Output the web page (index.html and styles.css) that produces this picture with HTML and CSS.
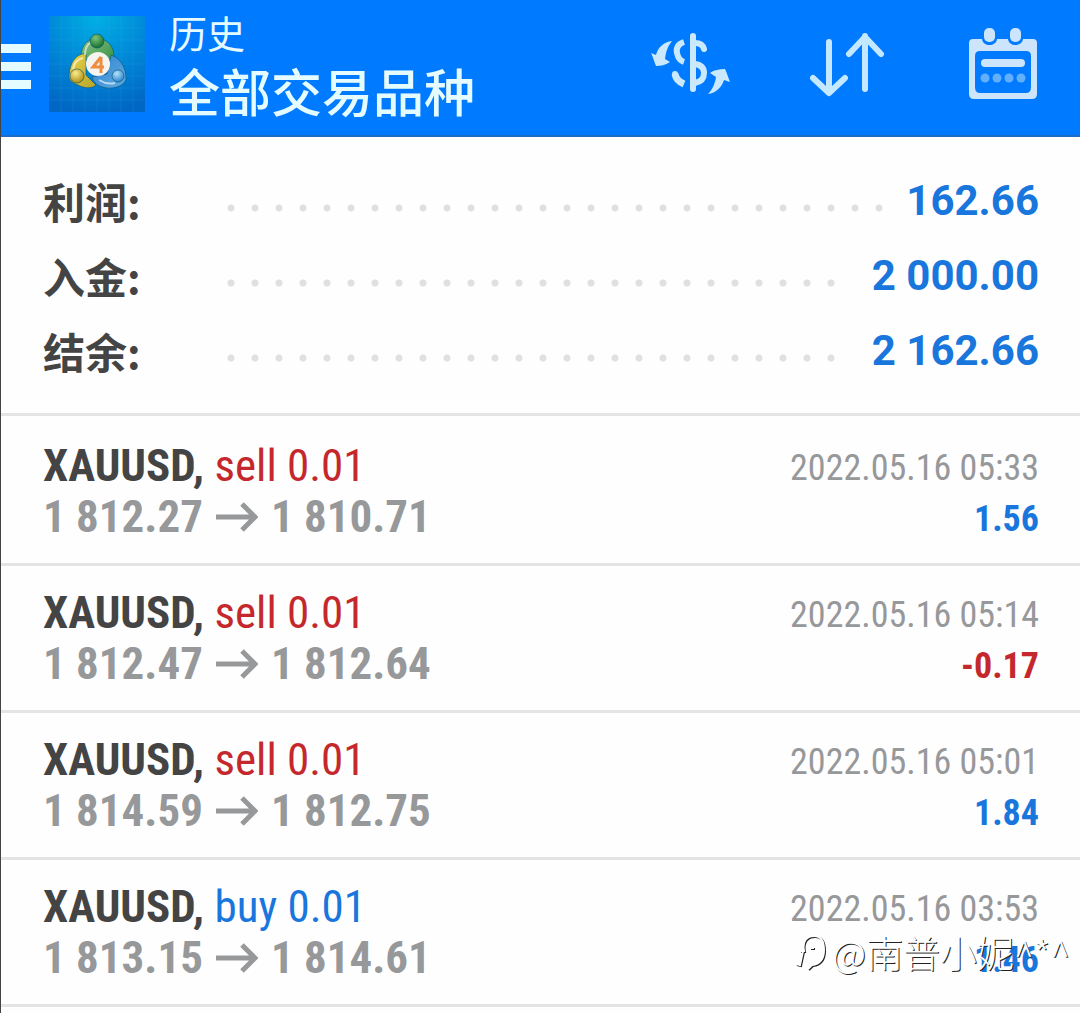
FILE: index.html
```html
<!DOCTYPE html>
<html lang="zh-CN">
<head>
<meta charset="utf-8">
<meta name="viewport" content="width=device-width, initial-scale=1">
<title>历史</title>
<link rel="stylesheet" href="styles.css">
</head>
<body>
<div class="app">
  <header class="bar">
    <button type="button" class="menu" aria-label="菜单"><span></span><span></span><span></span></button>
    <svg class="logo" viewBox="0 0 96 96" aria-hidden="true">
      <defs>
        <radialGradient id="sky" cx="50%" cy="0%" r="100%">
          <stop offset="0" stop-color="#00b0e4"/>
          <stop offset="0.5" stop-color="#008ad8"/>
          <stop offset="1" stop-color="#0068c4"/>
        </radialGradient>
        <linearGradient id="green" x1="0" y1="0" x2="1" y2="1">
          <stop offset="0" stop-color="#8cc488"/>
          <stop offset="1" stop-color="#2c8a3c"/>
        </linearGradient>
        <linearGradient id="gold" x1="0" y1="0" x2="1" y2="1">
          <stop offset="0" stop-color="#ecd44c"/>
          <stop offset="1" stop-color="#b4a428"/>
        </linearGradient>
        <linearGradient id="blue" x1="0" y1="0" x2="1" y2="1">
          <stop offset="0" stop-color="#2c80cc"/>
          <stop offset="1" stop-color="#60ace4"/>
        </linearGradient>
        <radialGradient id="headGreen" cx="40%" cy="30%" r="70%">
          <stop offset="0" stop-color="#7cc47c"/>
          <stop offset="1" stop-color="#14702c"/>
        </radialGradient>
        <radialGradient id="headGold" cx="40%" cy="30%" r="70%">
          <stop offset="0" stop-color="#fcec90"/>
          <stop offset="1" stop-color="#b09010"/>
        </radialGradient>
        <radialGradient id="headBlue" cx="40%" cy="30%" r="70%">
          <stop offset="0" stop-color="#b4e4fc"/>
          <stop offset="1" stop-color="#2c84cc"/>
        </radialGradient>
      </defs>
      <rect width="96" height="96" fill="url(#sky)"/>
      <path d="M12 0V96M24 0V96M36 0V96M48 0V96M60 0V96M72 0V96M84 0V96M0 12H96M0 24H96M0 36H96M0 48H96M0 60H96M0 72H96M0 84H96" stroke="#40b4f0" stroke-opacity="0.15" fill="none"/>
      <g stroke="#0a5470" stroke-opacity="0.6" stroke-width="1">
        <path d="M32 45C31 32 36 23 48 22C60 23 66 32 65 44L56 52L40 43Z" fill="url(#green)"/>
        <path d="M37 38C28 37 21 45 20 60C20 67 26 67 31 70C38 73 44 72 47 69L37 59Z" fill="url(#gold)"/>
        <path d="M62 39C71 42 77 51 77 63C75 71 62 74 53 71C47 69 44 65 43 61L58 58Z" fill="url(#blue)"/>
        <circle cx="48" cy="25" r="7" fill="url(#headGreen)"/>
        <circle cx="28" cy="60" r="7" fill="url(#headGold)"/>
        <circle cx="69" cy="60" r="6" fill="url(#headBlue)"/>
      </g>
      <path d="M36 39C36 33 38 29 41 27M24 53C25 47 29 43 34 42M50 64Q58 69 66 67" fill="none" stroke="#fff" stroke-opacity="0.6" stroke-width="2"/>
      <circle cx="49" cy="48" r="12" fill="#f6f4ee"/>
      <path d="M52 41L44 51H55M52 41V57" fill="none" stroke="#ee8c40" stroke-width="3"/>
    </svg>
    <div class="titles">
      <p class="screen">历史</p>
      <h1>全部交易品种</h1>
    </div>
    <div class="actions">
      <button type="button" aria-label="货币">
        <svg width="80" height="66" viewBox="0 0 80 66" aria-hidden="true">
          <g fill="none" stroke="#cbe9fd" stroke-width="6">
            <path d="M43 5V58" stroke-linecap="round"/>
            <path d="M45 12C50 12 53 14 54 18" stroke-linecap="round"/>
            <path d="M34 11C28 13 26 17 27 22C28 27 31 30 34 31"/>
            <path d="M45 33C52 34 54 38 54 42C54 48 50 51 45 52"/>
            <path d="M25 43C26 48 29 51 34 53" stroke-width="7"/>
            <path d="M25 43V43" stroke-linecap="round"/>
          </g>
          <path fill="#cbe9fd" d="M22 10C14 11 8 16 6 24L1 22C3 26 4 30 6 35C11 35 15 34 20 31L15 28C16 20 18 15 22 10Z"/>
          <path fill="#cbe9fd" d="M58 63C66 62 72 56 74 49L80 51C78 46 77 42 75 38C69 38 64 39 60 42L66 46C65 53 62 59 58 63Z"/>
        </svg>
      </button>
      <button type="button" aria-label="排序">
        <svg width="80" height="66" viewBox="0 0 80 66" aria-hidden="true">
          <path d="M20 11V61M4 47L20 62L36 47M56 58V5M40 23L56 6L72 23" fill="none" stroke="#c4e8ff" stroke-width="6" stroke-linecap="round" stroke-linejoin="round"/>
        </svg>
      </button>
      <button type="button" aria-label="日期">
        <svg width="70" height="72" viewBox="0 0 70 72" aria-hidden="true">
          <path fill="#cce4fc" fill-rule="evenodd" d="M5 11H14C15 19 28 19 29 11H40C41 19 54 19 55 11H65Q69 11 69 15V66Q69 71 64 71H6Q1 71 1 66V15Q1 11 5 11ZM12 23Q7 23 7 28V59Q7 65 12 65H58Q63 65 63 59V28Q63 23 58 23Z"/>
          <rect x="16" y="0" width="11" height="14" rx="5" fill="#cce4fc"/>
          <rect x="42" y="0" width="11" height="14" rx="5" fill="#cce4fc"/>
          <path d="M17 35H53" stroke="#cce4fc" stroke-width="8" stroke-linecap="round"/>
          <g fill="#62b0fc">
            <circle cx="17" cy="50" r="4.5"/>
            <circle cx="29" cy="50" r="4.5"/>
            <circle cx="41" cy="50" r="4.5"/>
            <circle cx="53" cy="50" r="4.5"/>
          </g>
        </svg>
      </button>
    </div>
  </header>

  <dl class="summary">
    <div><dt>利润:</dt><dd>162.66</dd></div>
    <div><dt>入金:</dt><dd>2 000.00</dd></div>
    <div><dt>结余:</dt><dd>2 162.66</dd></div>
  </dl>

  <ul class="deals">
    <li>
      <div class="deal">
        <p><b>XAUUSD,</b> <span class="sell">sell 0.01</span></p>
        <p class="prices">1 812.27 <svg class="arrow" viewBox="0 0 42 30" role="img" aria-label="至"><path d="M0 15H39M26 2L39 15L26 28"/></svg> 1 810.71</p>
      </div>
      <div class="result">
        <time>2022.05.16 05:33</time>
        <b class="plus">1.56</b>
      </div>
    </li>
    <li>
      <div class="deal">
        <p><b>XAUUSD,</b> <span class="sell">sell 0.01</span></p>
        <p class="prices">1 812.47 <svg class="arrow" viewBox="0 0 42 30" role="img" aria-label="至"><path d="M0 15H39M26 2L39 15L26 28"/></svg> 1 812.64</p>
      </div>
      <div class="result">
        <time>2022.05.16 05:14</time>
        <b class="minus">-0.17</b>
      </div>
    </li>
    <li>
      <div class="deal">
        <p><b>XAUUSD,</b> <span class="sell">sell 0.01</span></p>
        <p class="prices">1 814.59 <svg class="arrow" viewBox="0 0 42 30" role="img" aria-label="至"><path d="M0 15H39M26 2L39 15L26 28"/></svg> 1 812.75</p>
      </div>
      <div class="result">
        <time>2022.05.16 05:01</time>
        <b class="plus">1.84</b>
      </div>
    </li>
    <li>
      <div class="deal">
        <p><b>XAUUSD,</b> <span class="buy">buy 0.01</span></p>
        <p class="prices">1 813.15 <svg class="arrow" viewBox="0 0 42 30" role="img" aria-label="至"><path d="M0 15H39M26 2L39 15L26 28"/></svg> 1 814.61</p>
      </div>
      <div class="result">
        <time>2022.05.16 03:53</time>
        <b class="plus">1.46</b>
      </div>
      <div class="watermark">
        <svg width="32" height="42" viewBox="0 0 32 42" aria-hidden="true">
          <path class="edge" d="M1 34L5 35L8 21M5 21H9C7 11 12 6 19 6C26 6 29 12 29 20C29 29 25 34 17 35L13 39M15 18H19"/>
          <path class="face" d="M0 33L4 34L7 20M4 20H8C6 10 11 5 18 5C25 5 28 11 28 19C28 28 24 33 16 34L12 38M14 17H18"/>
        </svg>
        <span>@南普小妮^*^</span>
      </div>
    </li>
  </ul>
</div>
</body>
</html>
```

FILE: styles.css
```css
* {
  box-sizing: border-box;
}

body {
  margin: 0;
  background: #fefefe;
  color: #444;
  font-family: Roboto, "Noto Sans CJK SC", sans-serif;
}

h1, p, dl, dd, ul {
  margin: 0;
  padding: 0;
}

button {
  border: 0;
  padding: 0;
  background: none;
  cursor: pointer;
}

svg {
  display: block;
}

.app {
  min-height: 100vh;
  overflow: hidden;
  border-left: 1px solid #444;
}

/* top bar */
.bar {
  display: flex;
  align-items: center;
  height: 137px;
  padding: 0 42px 8px 0;
  background: #007aff;
  border-bottom: 2px solid #1b6dc8;
  color: #e4fbff;
}

.menu {
  display: grid;
  gap: 9px;
  width: 30px;
  margin: 6px 18px 0 0;
}

.menu span {
  height: 9px;
  background: #e4fbff;
}

.logo {
  width: 96px;
  height: 96px;
}

.titles {
  padding-top: 10px;
  margin-left: 24px;
}

.screen {
  font-size: 38px;
  line-height: 52px;
}

h1 {
  font-size: 51px;
  font-weight: 500;
  line-height: 68px;
}

.actions {
  display: flex;
  align-items: center;
  gap: 79px;
  margin-left: auto;
}

/* account totals */
.summary {
  padding: 26px 41px 25px 42px;
  border-bottom: 3px solid #e4e4e4;
  font-size: 42px;
  font-weight: 700;
  line-height: 75px;
}

.summary div {
  display: flex;
}

.summary dt {
  width: 184px;
  font-family: "Noto Sans CJK SC", sans-serif;
}

.summary dd {
  display: flex;
  flex: 1;
  color: #1976dc;
}

.summary dd::before {
  content: "";
  flex: 1;
  margin-right: 22px;
  background: radial-gradient(circle at 4px 45px, #e0e0e0 3px, transparent 4px) 0 0 / 24px 75px repeat-x;
}

/* deals */
.deals {
  padding-top: 3px;
  list-style: none;
  font-family: "Roboto Condensed", "Liberation Sans Narrow", Roboto, sans-serif;
}

.deals li {
  position: relative;
  display: flex;
  justify-content: space-between;
  height: 147px;
  padding: 21px 41px 0 42px;
  border-bottom: 3px solid #e4e4e4;
}

.deal {
  font-size: 45px;
  line-height: 51px;
}

.prices {
  display: flex;
  align-items: center;
  gap: 13px;
  color: #97989a;
  font-weight: 700;
}

.arrow {
  width: 42px;
  height: 30px;
  fill: none;
  stroke: #97989a;
  stroke-width: 5;
}

.result {
  display: flex;
  flex-direction: column;
  align-items: flex-end;
  padding-top: 3px;
  font-size: 36px;
  line-height: 51px;
}

.result time {
  color: #97989a;
}

.sell,
.minus {
  color: #c4282c;
}

.buy,
.plus {
  color: #1976dc;
}

.watermark {
  position: absolute;
  right: 10px;
  bottom: 27px;
  display: flex;
  align-items: center;
  gap: 4px;
  color: #fff;
  font: 300 37px/50px "Noto Sans CJK SC", sans-serif;
  text-shadow: 1px 1px 0 #222;
}

.watermark path {
  fill: none;
  stroke-width: 2;
}

.watermark .edge {
  stroke: #222;
}

.watermark .face {
  stroke: #fff;
}
```
